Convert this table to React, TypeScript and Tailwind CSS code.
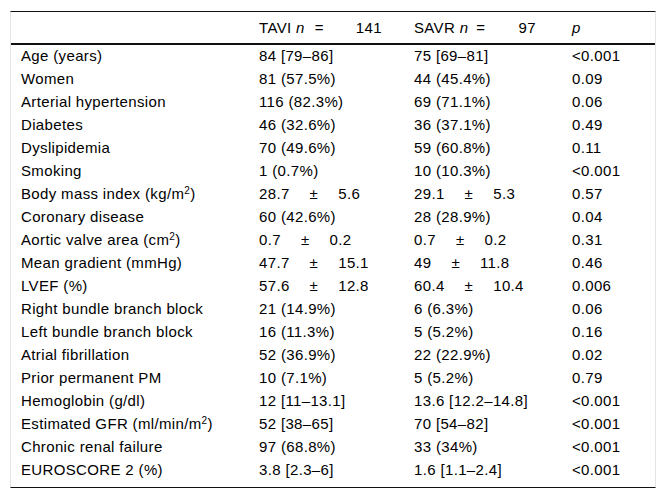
import React from "react";

type Cell = React.ReactNode;

const PM = ({ a, b }: { a: string; b: string }) => (
  <>
    {a}
    <span className="mx-5">±</span>
    {b}
  </>
);

const Sq = () => <sup className="text-[10px]">2</sup>;

const rows: [Cell, Cell, Cell, Cell][] = [
  ["Age (years)", "84 [79–86]", "75 [69–81]", "<0.001"],
  ["Women", "81 (57.5%)", "44 (45.4%)", "0.09"],
  ["Arterial hypertension", "116 (82.3%)", "69 (71.1%)", "0.06"],
  ["Diabetes", "46 (32.6%)", "36 (37.1%)", "0.49"],
  ["Dyslipidemia", "70 (49.6%)", "59 (60.8%)", "0.11"],
  ["Smoking", "1 (0.7%)", "10 (10.3%)", "<0.001"],
  [
    <>
      Body mass index (kg/m
      <Sq />)
    </>,
    <PM a="28.7" b="5.6" />,
    <PM a="29.1" b="5.3" />,
    "0.57",
  ],
  ["Coronary disease", "60 (42.6%)", "28 (28.9%)", "0.04"],
  [
    <>
      Aortic valve area (cm
      <Sq />)
    </>,
    <PM a="0.7" b="0.2" />,
    <PM a="0.7" b="0.2" />,
    "0.31",
  ],
  ["Mean gradient (mmHg)", <PM a="47.7" b="15.1" />, <PM a="49" b="11.8" />, "0.46"],
  ["LVEF (%)", <PM a="57.6" b="12.8" />, <PM a="60.4" b="10.4" />, "0.006"],
  ["Right bundle branch block", "21 (14.9%)", "6 (6.3%)", "0.06"],
  ["Left bundle branch block", "16 (11.3%)", "5 (5.2%)", "0.16"],
  ["Atrial fibrillation", "52 (36.9%)", "22 (22.9%)", "0.02"],
  ["Prior permanent PM", "10 (7.1%)", "5 (5.2%)", "0.79"],
  ["Hemoglobin (g/dl)", "12 [11–13.1]", "13.6 [12.2–14.8]", "<0.001"],
  [
    <>
      Estimated GFR (ml/min/m
      <Sq />)
    </>,
    "52 [38–65]",
    "70 [54–82]",
    "<0.001",
  ],
  ["Chronic renal failure", "97 (68.8%)", "33 (34%)", "<0.001"],
  ["EUROSCORE 2 (%)", "3.8 [2.3–6]", "1.6 [1.1–2.4]", "<0.001"],
];

const grid = "grid grid-cols-[248px_155px_158px_1fr]";

export default function App() {
  return (
    <div className="w-[666px] h-[499px] bg-white pt-[11px] font-['Liberation_Sans',Arial,sans-serif] text-[15px] tracking-[0.35px] text-black">
      <div className="ml-[10px] w-[646px] border-x border-x-[#e4e4e4] border-t border-t-[#111] border-b border-b-[#111]">
        <div className={`${grid} h-[31px] leading-[31px] border-b-2 border-b-[#111] box-content`}>
          <div className="pl-[10px]"></div>
          <div className="whitespace-nowrap">
            TAVI <i>n</i>
            <span className="ml-[10px] mr-[32px]">=</span>141
          </div>
          <div className="whitespace-nowrap">
            SAVR <i>n</i>
            <span className="ml-[8px] mr-[33px]">=</span>97
          </div>
          <div>
            <i>p</i>
          </div>
        </div>
        <div className="pb-[5px]">
          {rows.map((r, i) => (
            <div key={i} className={`${grid} h-[23px] leading-[21px]`}>
              <div className="pl-[10px] whitespace-nowrap">{r[0]}</div>
              <div className="whitespace-nowrap">{r[1]}</div>
              <div className="whitespace-nowrap">{r[2]}</div>
              <div className="whitespace-nowrap">{r[3]}</div>
            </div>
          ))}
        </div>
      </div>
    </div>
  );
}
